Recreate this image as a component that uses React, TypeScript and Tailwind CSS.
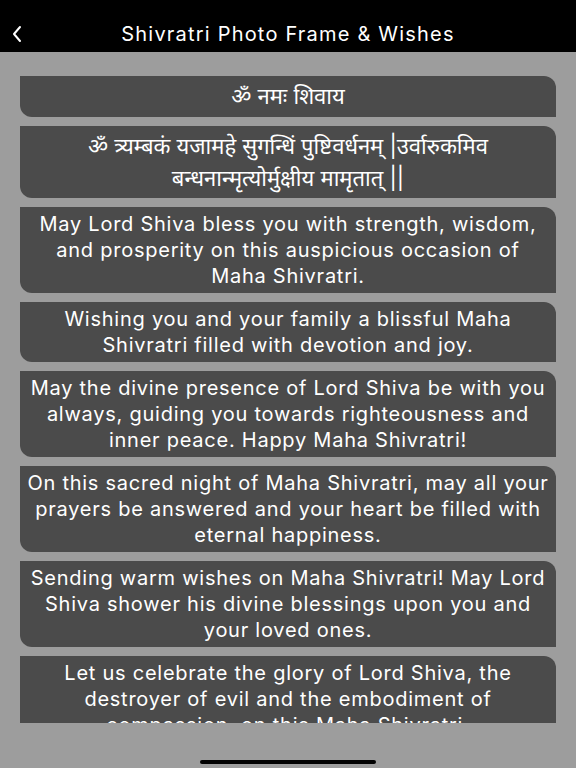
import React from "react";

const wishes = [
  "May Lord Shiva bless you with strength, wisdom, and prosperity on this auspicious occasion of Maha Shivratri.",
  "Wishing you and your family a blissful Maha Shivratri filled with devotion and joy.",
  "May the divine presence of Lord Shiva be with you always, guiding you towards righteousness and inner peace. Happy Maha Shivratri!",
  "On this sacred night of Maha Shivratri, may all your prayers be answered and your heart be filled with eternal happiness.",
  "Sending warm wishes on Maha Shivratri! May Lord Shiva shower his divine blessings upon you and your loved ones.",
  "Let us celebrate the glory of Lord Shiva, the destroyer of evil and the embodiment of compassion, on this Maha Shivratri.",
];

const font = { fontFamily: "Inter, 'Noto Sans', 'Noto Sans Devanagari', sans-serif" };

export default function App() {
  return (
    <div className="w-[576px] h-[768px] bg-[#9d9d9d] flex flex-col overflow-hidden" style={font}>
      <div className="h-[52px] bg-black flex items-center relative shrink-0">
        <svg className="absolute left-[11px] top-[25px]" width="12" height="18" viewBox="0 0 12 18">
          <path d="M9 2 L3 9 L9 16" stroke="white" strokeWidth="2" fill="none" strokeLinecap="round" strokeLinejoin="round" />
        </svg>
        <div className="w-full text-center text-white text-[20px] mt-[16px] font-normal tracking-[1.2px]">
          Shivratri Photo Frame &amp; Wishes
        </div>
      </div>
      <div className="h-[671px] overflow-hidden shrink-0 px-[20px] pt-[24px] flex flex-col gap-[9px]">
        <div className="bg-[#4b4b4b] rounded-tr-[12px] rounded-bl-[12px] h-[41px] flex items-center justify-center text-white text-[22px] shrink-0">
          ॐ नमः शिवाय
        </div>
        <div className="bg-[#4b4b4b] rounded-tr-[12px] rounded-bl-[12px] h-[72px] flex items-center justify-center text-white text-[22px] leading-[32px] text-center px-2 shrink-0">
          <div>
            ॐ त्र्यम्बकं यजामहे सुगन्धिं पुष्टिवर्धनम् |उर्वारुकमिव
            <br />
            बन्धनान्मृत्योर्मुक्षीय मामृतात् ||
          </div>
        </div>
        {wishes.map((w, i) => (
          <div
            key={i}
            className="bg-[#4b4b4b] rounded-tr-[12px] rounded-bl-[12px] py-[4px] px-[7px] text-white text-[20px] leading-[26px] text-center tracking-[0.75px] shrink-0"
          >
            {w}
          </div>
        ))}
      </div>
      <div className="flex-1 flex items-end justify-center pb-[4px]">
        <div className="w-[176px] h-[4px] rounded-full bg-black" />
      </div>
    </div>
  );
}
